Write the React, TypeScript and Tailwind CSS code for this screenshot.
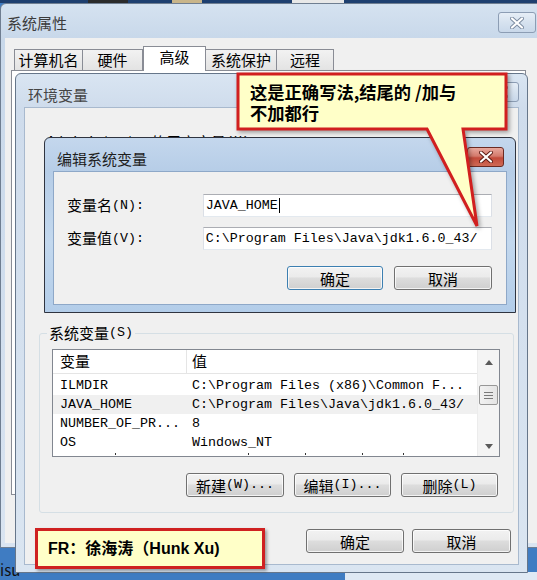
import React from 'react';

const CJK = "font-['Noto_Sans_CJK_SC','Liberation_Sans',sans-serif]";
const MONO = "font-['Liberation_Mono','Noto_Sans_CJK_SC',monospace] text-[13.33px]";

function WinButton({
  children,
  className = '',
  focused = false,
}: {
  children: React.ReactNode;
  className?: string;
  focused?: boolean;
}) {
  return (
    <div
      className={`flex h-[24px] items-center justify-center rounded-[3px] border bg-[linear-gradient(to_bottom,#f2f2f2_0%,#ebebeb_45%,#dddddd_50%,#cfcfcf_100%)] text-[15px] leading-none text-black shadow-[inset_0_0_0_1px_rgba(255,255,255,0.75)] ${
        focused ? 'border-[#3c7fb1]' : 'border-[#707070]'
      } ${className}`}
    >
      {children}
    </div>
  );
}

function CloseButton({ active = false, className = '' }: { active?: boolean; className?: string }) {
  return (
    <div
      className={`flex items-center justify-center rounded-[3px] border ${
        active
          ? 'border-[#6b2a22] bg-[linear-gradient(to_bottom,#e8a89d_0%,#d47a6c_45%,#c24a3a_55%,#cf6a55_100%)]'
          : 'border-[#8c9db4] bg-[linear-gradient(to_bottom,#e6eef7_0%,#d6e2ef_50%,#c9d8ea_100%)]'
      } ${className}`}
    >
      <svg width="14" height="12" viewBox="0 0 14 12">
        <path
          d="M2 1.5 L12 10.5 M12 1.5 L2 10.5"
          stroke={active ? '#5a1a12' : '#7a8aa0'}
          strokeWidth="4"
          strokeLinecap="round"
        />
        <path
          d="M2 1.5 L12 10.5 M12 1.5 L2 10.5"
          stroke="#ffffff"
          strokeWidth="2.2"
          strokeLinecap="round"
        />
      </svg>
    </div>
  );
}

function TextBox({ value, caret = false }: { value: string; caret?: boolean }) {
  return (
    <div className="flex h-[23px] w-[290px] items-center border border-[#dbdfe6] border-t-[#abadb3] border-b-[#e3e9ef] bg-white pl-[2px]">
      <span className={`${MONO} text-black`}>{value}</span>
      {caret && <span className="ml-px h-[15px] w-px bg-black" />}
    </div>
  );
}

const rows = [
  { name: 'ILMDIR', value: 'C:\\Program Files (x86)\\Common F...', selected: false },
  { name: 'JAVA_HOME', value: 'C:\\Program Files\\Java\\jdk1.6.0_43/', selected: true },
  { name: 'NUMBER_OF_PR...', value: '8', selected: false },
  { name: 'OS', value: 'Windows_NT', selected: false },
];

export default function App() {
  return (
    <div className={`relative h-[580px] w-[537px] overflow-hidden bg-[#3f7cc2] ${CJK}`}>
      {/* desktop strip above the window */}
      <div className="absolute left-0 top-0 flex h-[3px] w-full bg-[#1e3f6f]">
        <div className="ml-[88px] w-[40px] bg-[#2b2b2b]" />
        <div className="ml-[44px] w-[30px] bg-[#c9b58a]" />
        <div className="ml-[90px] w-[52px] bg-[#e8e8e8]" />
      </div>

      {/* taskbar fragment bottom-left */}
      <div className="absolute bottom-[1px] left-0 text-[15px] leading-[18px] text-[#111]">isu</div>
      <div className="absolute bottom-0 right-0 h-[8px] w-[192px] bg-[#dfe9f4]" />

      {/* 系统属性 window */}
      <div className="absolute left-0 top-[3px] flex h-[545px] w-[545px] flex-col rounded-t-[6px] border border-[#6f7e91] bg-[linear-gradient(to_bottom,#d5e2f0_0%,#c8d8ea_35px,#d9e4f1_100%)] px-[4px] pb-[4px]">
        <div className="flex h-[34px] items-start justify-between">
          <span className="pl-[2px] pt-[10px] text-[15px] leading-[18px] text-[#3c3c3c]">系统属性</span>
          <CloseButton className="mr-[4px] mt-[8px] h-[21px] w-[38px]" />
        </div>
        <div className="flex flex-1 flex-col bg-[#f0f0f0] pl-[6px] pt-[8px]">
          <div className="ml-[3px] flex h-[24px] items-end text-[15px] text-black">
            <div className="flex h-[21px] w-[69px] items-center justify-center border border-b-0 border-[#898c95] bg-[linear-gradient(to_bottom,#f2f2f2,#e3e3e3)]">计算机名</div>
            <div className="flex h-[21px] w-[60px] items-center justify-center border border-b-0 border-l-0 border-[#898c95] bg-[linear-gradient(to_bottom,#f2f2f2,#e3e3e3)]">硬件</div>
            <div className="relative z-10 -mb-px flex h-[25px] w-[63px] items-center justify-center border border-b-0 border-[#898c95] bg-white pb-[3px]">高级</div>
            <div className="flex h-[21px] w-[71px] items-center justify-center border border-b-0 border-l-0 border-[#898c95] bg-[linear-gradient(to_bottom,#f2f2f2,#e3e3e3)]">系统保护</div>
            <div className="flex h-[21px] w-[57px] items-center justify-center border border-b-0 border-l-0 border-[#898c95] bg-[linear-gradient(to_bottom,#f2f2f2,#e3e3e3)]">远程</div>
          </div>
          <div className="h-[425px] w-[515px] border border-[#898c95] bg-white" />
        </div>
      </div>

      {/* 环境变量 window */}
      <div className="absolute left-[15px] top-[73px] flex h-[500px] w-[513px] flex-col rounded-t-[6px] border border-[#66768a] bg-[linear-gradient(to_bottom,#d9e5f2_0%,#cfdcec_34px,#dae5f1_100%)] px-[8px] pb-[7px]">
        <div className="flex h-[33px] items-start justify-between">
          <span className="pl-[4px] pt-[12px] text-[15px] leading-[18px] text-[#454545]">环境变量</span>
          <CloseButton className="mt-[8px] h-[20px] w-[36px]" />
        </div>
        <div className="flex flex-1 flex-col border border-[#a8b9ce] bg-[#f0f0f0]">
          <div className="ml-[22px] mt-[26px] flex h-[16px] items-center whitespace-nowrap text-black">
            <span className={MONO}>Administrator </span>
            <span className="text-[15px]">的用户变量</span>
            <span className={MONO}>(U)</span>
          </div>

          {/* 系统变量 group */}
          <div className="relative ml-[14px] mt-[183px] w-[475px] rounded-[3px] border border-[#d5dfe5] pb-[15px] pl-[12px] pt-[15px]">
            <span className="absolute left-[7px] top-[-11px] flex items-center bg-[#f0f0f0] px-[2px] leading-[20px] text-black">
              <span className="text-[15px]">系统变量</span>
              <span className={MONO}>(S)</span>
            </span>

            <div className="flex h-[108px] w-[448px] overflow-hidden border border-[#828790] bg-white">
              <div className="flex flex-1 flex-col">
                <div className="flex h-[24px] shrink-0 items-center border-b border-[#e5e5e5] text-[15px] text-black">
                  <div className="flex h-full w-[134px] items-center border-r border-[#e5e5e5] pl-[7px]">变量</div>
                  <div className="pl-[5px]">值</div>
                </div>
                <div className="pt-[2px]">
                  {rows.map((r) => (
                    <div
                      key={r.name}
                      className={`flex h-[19px] shrink-0 items-center whitespace-nowrap text-black ${MONO} ${r.selected ? 'bg-[#f0f0f0]' : ''}`}
                    >
                      <div className="w-[134px] pl-[7px]">{r.name}</div>
                      <div className="pl-[5px]">{r.value}</div>
                    </div>
                  ))}
                  <div className="ml-[62px] mt-[1px] flex h-[2px] gap-[56px]">
                    <span className="w-px bg-[#333]" />
                    <span className="ml-[76px] w-px bg-[#333]" />
                    <span className="w-px bg-[#333]" />
                    <span className="w-px bg-[#333]" />
                    <span className="ml-[-16px] w-px bg-[#333]" />
                  </div>
                </div>
              </div>
              {/* scrollbar */}
              <div className="flex w-[22px] flex-col items-center border-l border-[#ececec] bg-[#f4f4f4]">
                <div className="flex h-[22px] w-full items-center justify-center pt-[2px]">
                  <svg width="8" height="5" viewBox="0 0 8 5">
                    <path d="M0 5 L4 0 L8 5 Z" fill="#5a5a5a" />
                  </svg>
                </div>
                <div className="mt-[13px] flex h-[20px] w-[19px] items-center justify-center rounded-[2px] border border-[#979797] bg-[linear-gradient(to_right,#f2f2f2,#e4e4e4)]">
                  <svg width="9" height="7" viewBox="0 0 9 7">
                    <path d="M0 0.5 H9 M0 3.5 H9 M0 6.5 H9" stroke="#7a7a7a" strokeWidth="1" />
                  </svg>
                </div>
                <div className="flex flex-1 items-end justify-center pb-[7px]">
                  <svg width="8" height="5" viewBox="0 0 8 5">
                    <path d="M0 0 L8 0 L4 5 Z" fill="#5a5a5a" />
                  </svg>
                </div>
              </div>
            </div>

            <div className="mr-[15px] mt-[16px] flex justify-end gap-[10px]">
              <WinButton className="w-[98px]">
                <span>新建</span>
                <span className={MONO}>(W)...</span>
              </WinButton>
              <WinButton className="w-[97px]">
                <span>编辑</span>
                <span className={MONO}>(I)...</span>
              </WinButton>
              <WinButton className="w-[97px]">
                <span>删除</span>
                <span className={MONO}>(L)</span>
              </WinButton>
            </div>
          </div>

          <div className="mr-[7px] mt-[16px] flex justify-end gap-[8px]">
            <WinButton className="w-[98px]">确定</WinButton>
            <WinButton className="w-[99px]">取消</WinButton>
          </div>
        </div>
      </div>

      {/* 编辑系统变量 dialog */}
      <div className="absolute left-[44px] top-[137px] flex h-[176px] w-[472px] flex-col rounded-t-[6px] border border-[#2f3440] bg-[linear-gradient(to_bottom,#c4d7ed_0%,#b6cde7_34px,#c3d8ee_60%,#b3cde9_100%)] px-[8px] pb-[7px]">
        <div className="flex h-[33px] items-start justify-between">
          <span className="pl-[4px] pt-[12px] text-[15px] leading-[18px] text-[#1e1e1e]">编辑系统变量</span>
          <CloseButton active className="mr-[3px] mt-[9px] h-[20px] w-[37px]" />
        </div>
        <div className="flex flex-1 flex-col border border-[#8ea8c8] bg-[#f0f0f0] pl-[13px] pr-[14px]">
          <div className="mt-[22px] flex items-center">
            <div className="flex w-[136px] items-center text-black">
              <span className="text-[15px]">变量名</span>
              <span className={MONO}>(N):</span>
            </div>
            <TextBox value="JAVA_HOME" caret />
          </div>
          <div className="mt-[10px] flex items-center">
            <div className="flex w-[136px] items-center text-black">
              <span className="text-[15px]">变量值</span>
              <span className={MONO}>(V):</span>
            </div>
            <TextBox value="C:\Program Files\Java\jdk1.6.0_43/" />
          </div>
          <div className="mt-[16px] flex justify-end gap-[11px]">
            <WinButton focused className="w-[96px]">确定</WinButton>
            <WinButton className="w-[98px]">取消</WinButton>
          </div>
        </div>
      </div>

      {/* top callout */}
      <svg
        className="absolute left-[230px] top-[65px] drop-shadow-[2px_2px_2px_rgba(0,0,0,0.35)]"
        width="290"
        height="170"
        viewBox="0 0 290 170"
      >
        <path
          d="M8 9 H276 V64 H233 L247 161 L197 64 H8 Z"
          fill="#ffffc8"
          stroke="#d11f1f"
          strokeWidth="3"
          strokeLinejoin="miter"
        />
      </svg>
      <div className="absolute left-[250px] top-[81px] text-[17.3px] font-bold leading-[21px] text-black">
        <div>这是正确写法,结尾的 /加与</div>
        <div>不加都行</div>
      </div>

      {/* bottom callout */}
      <div className="absolute left-[35px] top-[528px] flex h-[41px] w-[230px] items-center border-[3px] border-[#cf2121] bg-[#ffffc8] pl-[10px] shadow-[2px_2px_3px_rgba(0,0,0,0.35)]">
        <span className="font-['Liberation_Sans','Noto_Sans_CJK_SC',sans-serif] text-[16px] font-bold text-black">
          FR：徐海涛（Hunk Xu)
        </span>
      </div>
    </div>
  );
}
